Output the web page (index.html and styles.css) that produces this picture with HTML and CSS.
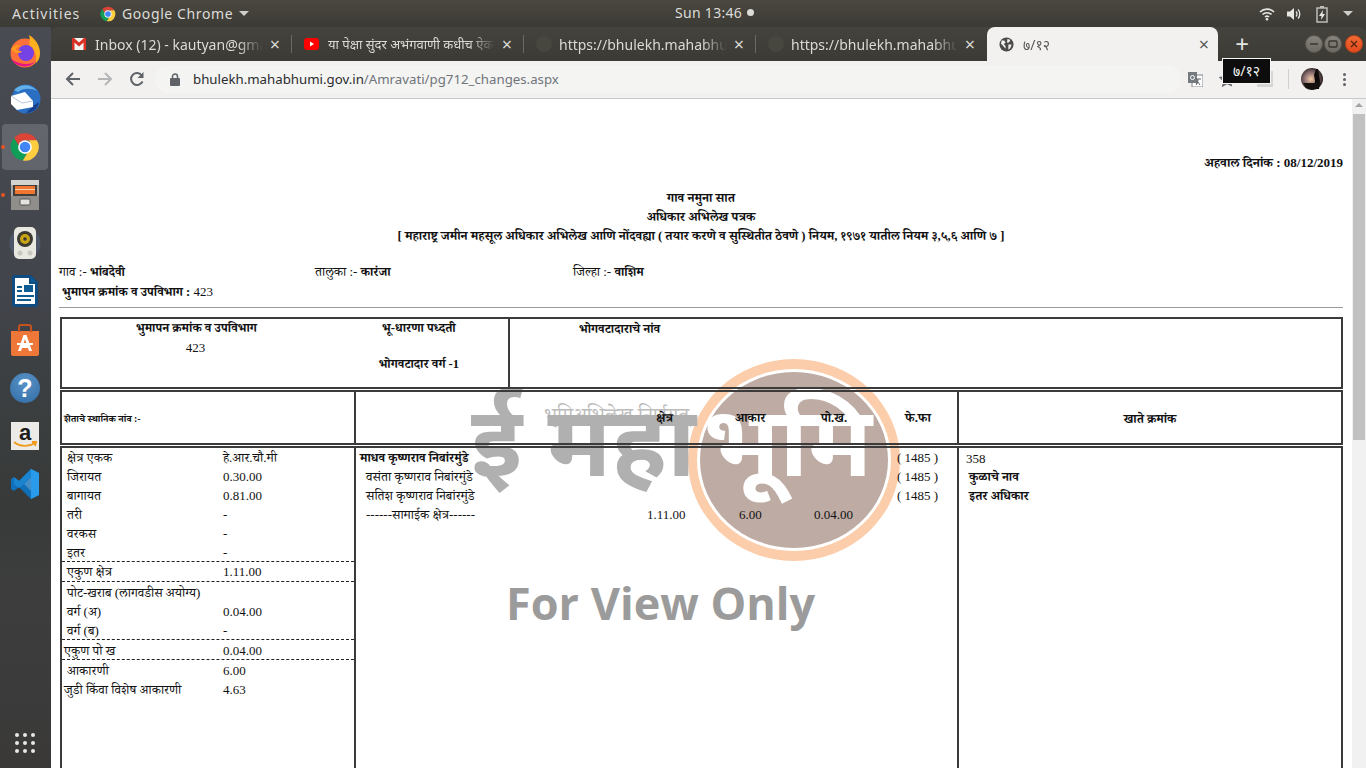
FILE: index.html
```html
<!DOCTYPE html>
<html lang="mr">
<head>
    <meta charset="UTF-8" />
    <title>७/१२</title>
    <link rel="stylesheet" href="styles.css">
</head>
<body>
    <svg class="defs" width="0" height="0">
        <symbol id="chrome" viewBox="0 0 48 48">
            <path fill="#db4437" d="M24 2a22 22 0 0 1 19 11H24a11 11 0 0 0-10.400 7.500L6.500 9.500A22 22 0 0 1 24 2z"/>
            <path fill="#0f9d58" d="M6.500 9.500l9.500 16.500a9 9 0 0 0 11 7.500L20.500 45.700A22 22 0 0 1 6.500 9.500z"/>
            <path fill="#ffcd40" d="M43 13a22 22 0 0 1-22.500 32.700L30.500 29a11 11 0 0 0-.5-16z"/>
            <circle cx="24" cy="24" r="11" fill="#fff"/>
            <circle cx="24" cy="24" r="8.500" fill="#4285f4"/>
        </symbol>
    </svg>

    <div class="topbar">
        <span class="activities">Activities</span>
        <svg class="top-chrome"><use href="#chrome"/></svg>
        <span class="app-name">Google Chrome</span>
        <span class="caret"></span>
        <span class="clock">Sun 13:46<i class="clock-dot"></i></span>
        <div class="tray">
            <svg width="16" height="14" viewBox="0 0 16 14"><path fill="none" stroke="#e6e6e2" stroke-width="1.600" d="M1 5a10 10 0 0 1 14 0M3.500 7.500a6.500 6.500 0 0 1 9 0M6 10a3 3 0 0 1 4 0"/><circle cx="8" cy="12.300" r="1.300" fill="#e6e6e2"/></svg>
            <svg width="16" height="14" viewBox="0 0 16 14"><path fill="#e6e6e2" d="M1 4.500h3L8 1v12L4 9.500H1z"/><path fill="none" stroke="#e6e6e2" stroke-width="1.300" d="M10 4.500a3.500 3.500 0 0 1 0 5M12 2.500a6.500 6.500 0 0 1 0 9"/></svg>
            <svg class="battery" width="12" height="18" viewBox="0 0 12 18"><rect x="1" y="3" width="10" height="14" fill="none" stroke="#bdbdb8" stroke-width="1.500"/><rect x="4" y="1" width="4" height="2" fill="#bdbdb8"/><path fill="#e6e6e2" d="M7 5L3 11h2.500L5 15l4-6H6.500z"/></svg>
            <span class="caret tray-caret"></span>
        </div>
    </div>

    <div class="desk">
        <nav class="dock">
            <div class="dock-item">
                <svg width="34" height="34" viewBox="0 0 34 34"><circle cx="17" cy="19" r="14.500" fill="#ff7139"/><path fill="#ffb01f" d="M21 1c5 3 11 9 11 18 0 5-2 8-4 10 1-8-1-14-7-18 1-3 1-7 0-10z"/><path fill="#e31587" d="M3 25c4 7 16 11 24 3-6 3-15 3-24-3z"/><circle cx="18" cy="19" r="8" fill="#7542e5"/><path fill="#ff9a1f" d="M3 15c3-4 8-5 11-3-4 0-6 2-6 4 3 0 5 1 6 2-4 2-8 1-11-3z"/></svg>
            </div>
            <div class="dock-item">
                <svg width="34" height="34" viewBox="0 0 34 34"><circle cx="18" cy="17" r="14.500" fill="#2a6fc1"/><path fill="#61b0ea" d="M6 8c5-6 17-7 23 1-6-3-14-3-19 1z"/><path fill="#173f8c" d="M18 31c6 0 12-4 13-11l-6 4z"/><path fill="#fff" d="M3 14l14-4 8 9v6L9 28 3 22z"/><path fill="none" stroke="#b8c6da" stroke-width="1" d="M3 14l11 7 11-2"/></svg>
            </div>
            <div class="dock-item dock-active">
                <i class="run-dot"></i>
                <svg width="30" height="30"><use href="#chrome"/></svg>
            </div>
            <div class="dock-item">
                <i class="run-dot"></i>
                <svg width="28" height="30" viewBox="0 0 28 30"><rect width="28" height="30" rx="1" fill="#a9a8a4"/><rect y="0" width="28" height="5" fill="#d4d3cf"/><rect x="2" y="5" width="24" height="11" fill="#3f3d3a"/><rect x="4" y="6" width="20" height="8" fill="#f0752e"/><rect x="4" y="9" width="20" height="1" fill="#f7d2b4"/><rect y="16" width="28" height="14" fill="#8f8e8a"/><rect x="9" y="19" width="10" height="6" rx="1" fill="#e4e3df" stroke="#555" stroke-width="1"/></svg>
            </div>
            <div class="dock-item">
                <svg width="32" height="34" viewBox="0 0 32 34"><circle cx="16" cy="17" r="15.500" fill="#4c5668"/><rect x="5" y="1" width="22" height="32" rx="5" fill="#e8e7e0"/><circle cx="16" cy="13" r="8" fill="#3c3a30"/><circle cx="16" cy="13" r="5" fill="#c9a514"/><circle cx="16" cy="13" r="1.800" fill="#3c3a30"/><circle cx="11" cy="27" r="2.500" fill="#c8c7c0"/><circle cx="21" cy="27" r="2.500" fill="#c8c7c0"/></svg>
            </div>
            <div class="dock-item">
                <svg width="26" height="32" viewBox="0 0 26 32"><path fill="#0f4c81" d="M2 0h17l7 7v23a2 2 0 0 1-2 2H2a2 2 0 0 1-2-2V2a2 2 0 0 1 2-2z"/><path fill="#fff" d="M3 3h14v6h6v20H3z"/><path fill="#0f5c94" d="M19 2l5 5h-5zM5 11h5v2H5zM5 15h5v2H5zM12 10h9v7h-9zM5 20h17v2H5zM5 24h14v2H5z"/></svg>
            </div>
            <div class="dock-item">
                <svg width="28" height="32" viewBox="0 0 28 32"><path fill="#ef7738" d="M0 7h28v23a2 2 0 0 1-2 2H2a2 2 0 0 1-2-2z"/><path fill="none" stroke="#c5531f" stroke-width="2" d="M8 8V3a2 2 0 0 1 2-2h8a2 2 0 0 1 2 2v5"/><path fill="#fff" d="M12.500 11h3L21 27h-3l-1-3h-6l-1 3H7zM14 15l-2 6h4z"/><rect x="6" y="19" width="16" height="2" fill="#fff"/></svg>
            </div>
            <div class="dock-item">
                <span class="help-icon">?</span>
            </div>
            <div class="dock-item">
                <div class="amazon-icon">
                    <span>a</span>
                    <svg width="24" height="8" viewBox="0 0 24 8"><path fill="none" stroke="#f09a1a" stroke-width="1.800" d="M1 1c6 5 15 5 21 1M19 1l4 0-1 4"/></svg>
                </div>
            </div>
            <div class="dock-item">
                <svg width="28" height="30" viewBox="0 0 28 30"><path fill="#0f6fb8" d="M20 0l8 4v22l-8 4L8 18l-5 4-3-2v-10l3-2 5 4z"/><path fill="#2a9bea" d="M20 0l8 4v22l-8 4z"/><path fill="#fff" fill-opacity=".22" d="M20 8l-7 7 7 7z"/><path fill="#1b84d1" d="M3 8l5 4 12-12v8l-7 7-5 4-5-4z"/></svg>
            </div>
            <div class="apps-grid">
                <i></i><i></i><i></i><i></i><i></i><i></i><i></i><i></i><i></i>
            </div>
        </nav>

        <div class="window">
            <div class="tabstrip">
                <div class="tab">
                    <svg class="favicon" width="14" height="12" viewBox="0 0 14 12"><rect width="14" height="12" fill="#f4f4f2"/><path fill="#d93025" d="M0 0h2l5 4.500L12 0h2v12h-2.500V4.500L7 8.500 2.500 4.500V12H0z"/></svg>
                    <span class="tab-title">Inbox (12) - kautyan@gmail.com</span>
                    <span class="tab-close">×</span>
                </div>
                <div class="tab">
                    <svg class="favicon" width="15" height="12" viewBox="0 0 15 12"><rect width="15" height="12" rx="3" fill="#f00"/><path fill="#fff" d="M6 3.500l4 2.500-4 2.500z"/></svg>
                    <span class="tab-title tab-title-mr">या पेक्षा सुंदर अभंगवाणी कधीच ऐकली नसेल</span>
                    <span class="tab-close">×</span>
                </div>
                <div class="tab">
                    <i class="favicon-dark"></i>
                    <span class="tab-title">https://bhulekh.mahabhumi.gov.in</span>
                    <span class="tab-close">×</span>
                </div>
                <div class="tab tab-last">
                    <i class="favicon-dark"></i>
                    <span class="tab-title">https://bhulekh.mahabhumi.gov.in</span>
                    <span class="tab-close">×</span>
                </div>
                <div class="tab tab-active">
                    <svg class="favicon" width="15" height="15" viewBox="0 0 16 16"><circle cx="8" cy="8" r="7.500" fill="#4a4a48"/><path fill="#f2f1ef" d="M3 3.500l3 .5 1 2-2 1.500 2 2v3L4.500 9.500 2 7zM9 2l3 1-1 2.500-2.500.5zM10 8h3.500L12 12l-2 1.500z"/></svg>
                    <span class="tab-title">७/१२</span>
                    <span class="tab-close">×</span>
                </div>
                <span class="new-tab">+</span>
                <div class="win-btns">
                    <span class="win-btn"><svg width="10" height="10" viewBox="0 0 10 10"><path stroke="#38362f" stroke-width="1.500" d="M1 5h8"/></svg></span>
                    <span class="win-btn"><svg width="10" height="10" viewBox="0 0 10 10"><rect x="1" y="2" width="8" height="6" rx="1" fill="none" stroke="#38362f" stroke-width="1.300"/></svg></span>
                    <span class="win-btn win-close"><svg width="10" height="10" viewBox="0 0 10 10"><path stroke="#5a2412" stroke-width="1.400" d="M2 2l6 6M8 2l-6 6"/></svg></span>
                </div>
            </div>

            <div class="toolbar">
                <svg class="nav-icon" width="16" height="16" viewBox="0 0 16 16"><path fill="none" stroke="#5f6368" stroke-width="2" d="M15 8H2M8 2L2 8l6 6"/></svg>
                <svg class="nav-icon" width="16" height="16" viewBox="0 0 16 16"><path fill="none" stroke="#b4b6b8" stroke-width="2" d="M1 8h13M8 2l6 6-6 6"/></svg>
                <svg class="nav-icon" width="16" height="16" viewBox="0 0 16 16"><path fill="none" stroke="#5f6368" stroke-width="2" d="M13.500 10.500A6 6 0 1 1 13 4.500"/><path fill="#5f6368" d="M14.500 1v6h-6z"/></svg>
                <div class="omnibox">
                    <svg width="10" height="13" viewBox="0 0 10 13"><path fill="none" stroke="#5f6368" stroke-width="1.500" d="M2.500 6V3.500a2.500 2.500 0 0 1 5 0V6"/><rect y="5" width="10" height="8" rx="1" fill="#5f6368"/></svg>
                    <span class="url"><b>bhulekh.mahabhumi.gov.in</b>/Amravati/pg712_changes.aspx</span>
                </div>
                <svg class="translate-icon" width="15" height="15" viewBox="0 0 15 15"><rect x="4" y="3" width="11" height="12" fill="#fff" stroke="#80868b"/><rect width="9" height="11" fill="#757a7e"/><circle cx="4.500" cy="5.500" r="2" fill="none" stroke="#fff"/><path stroke="#5f6368" d="M8 7h5M10 7c0 3-1 5-2 6M10 10l2 3"/></svg>
                <svg class="star-icon" width="16" height="16" viewBox="0 0 16 16"><path fill="none" stroke="#5f6368" stroke-width="1.300" d="M8 1.500l2 4.500 4.800.5-3.600 3.200 1 4.700L8 12.500l-4.200 2.400 1-4.700L1.200 6.500 6 6z"/></svg>
                <span class="ext-icon"></span>
                <span class="toolbar-sep"></span>
                <svg class="avatar" width="22" height="22" viewBox="0 0 22 22"><defs><radialGradient id="dusk" cx=".45" cy=".5" r=".6"><stop offset="0" stop-color="#f3c9a6"/><stop offset=".5" stop-color="#8b6f70"/><stop offset="1" stop-color="#141110"/></radialGradient></defs><circle cx="11" cy="11" r="11" fill="url(#dusk)"/><path fill="#0d0b0a" d="M15 1h2l1 6 1 6-1 8h-5l1-8-1-6z"/><path fill="#15110f" d="M2 15h18l-3 5-6 2-6-2z"/></svg>
                <span class="kebab"><i></i><i></i><i></i></span>
            </div>
            <div class="tooltip">७/१२</div>

            <div class="page">
                <div class="watermark">
                    <svg class="wm-logo" width="212" height="202" viewBox="0 0 212 202">
                        <ellipse cx="106" cy="101" rx="106" ry="101" fill="#fccdaa"/>
                        <ellipse cx="106" cy="101" rx="97" ry="91" fill="#fff"/>
                        <ellipse cx="106" cy="101" rx="94" ry="88" fill="#bdaba4"/>
                    </svg>
                    <span class="wm-org">भूमिअभिलेख निर्णयत्</span>
                    <span class="wm-maha">ई महा</span>
                    <span class="wm-bhumi">भूमि</span>
                    <span class="wm-only">For View Only</span>
                </div>

                <div class="sheet">
                    <div class="report-date">अहवाल दिनांक : 08/12/2019</div>
                    <div class="titles">
                        <div>गाव नमुना सात</div>
                        <div>अधिकार अभिलेख पत्रक</div>
                        <div>[ महाराष्ट्र जमीन महसूल अधिकार अभिलेख आणि नोंदवह्या ( तयार करणे व सुस्थितीत ठेवणे ) नियम, १९७१ यातील नियम ३,५,६ आणि ७ ]</div>
                    </div>
                    <div class="place-row">
                        <span class="place">गाव :- <b>भांबदेवी</b></span>
                        <span class="place">तालुका :- <b>कारंजा</b></span>
                        <span class="place">जिल्हा :- <b>वाशिम</b></span>
                    </div>
                    <div class="survey-line"><b>भुमापन क्रमांक व उपविभाग :</b> 423</div>
                    <div class="rule"></div>

                    <div class="box box-top">
                        <div class="top-left">
                            <div class="top-col">
                                <b>भुमापन क्रमांक व उपविभाग</b>
                                <span>423</span>
                            </div>
                            <div class="top-col top-col-2">
                                <b>भू-धारणा पध्दती</b>
                                <b class="holder-class">भोगवटादार वर्ग -1</b>
                            </div>
                        </div>
                        <div class="top-right"><b>भोगवटादाराचे नांव</b></div>
                    </div>

                    <div class="box box-head">
                        <div class="head-local">शेताचे स्थानिक नांव :-</div>
                        <div class="head-mid">
                            <b class="h-area">क्षेत्र</b>
                            <b class="h-akar">आकार</b>
                            <b class="h-pokh">पो.ख.</b>
                            <b class="h-fefa">फे.फा</b>
                        </div>
                        <div class="head-acct"><b>खाते क्रमांक</b></div>
                    </div>

                    <div class="box box-body">
                        <div class="areas">
                            <div class="area-row"><span>क्षेत्र एकक</span><span>हे.आर.चौ.मी</span></div>
                            <div class="area-row"><span>जिरायत</span><span>0.30.00</span></div>
                            <div class="area-row"><span>बागायत</span><span>0.81.00</span></div>
                            <div class="area-row"><span>तरी</span><span>-</span></div>
                            <div class="area-row"><span>वरकस</span><span>-</span></div>
                            <div class="area-row"><span>इतर</span><span>-</span></div>
                            <div class="area-row area-total area-total-first"><span>एकुण क्षेत्र</span><span>1.11.00</span></div>
                            <div class="area-row area-flush"><span>पोट-खराब (लागवडीस अयोग्य)</span></div>
                            <div class="area-row"><span>वर्ग (अ)</span><span>0.04.00</span></div>
                            <div class="area-row"><span>वर्ग (ब)</span><span>-</span></div>
                            <div class="area-row area-total area-flush"><span>एकुण पो ख</span><span>0.04.00</span></div>
                            <div class="area-row"><span>आकारणी</span><span>6.00</span></div>
                            <div class="area-row area-flush"><span>जुडी किंवा विशेष आकारणी</span><span>4.63</span></div>
                        </div>
                        <div class="owners">
                            <div class="owner-row owner-main"><b>माधव कृष्णराव निबांरमुंडे</b><span class="fefa">( 1485 )</span></div>
                            <div class="owner-row"><span>वसंता कृष्णराव निबांरमुंडे</span><span class="fefa">( 1485 )</span></div>
                            <div class="owner-row"><span>सतिश कृष्णराव निबांरमुंडे</span><span class="fefa">( 1485 )</span></div>
                            <div class="owner-row common">
                                <span>------सामाईक क्षेत्र------</span>
                                <span class="c-area">1.11.00</span>
                                <span class="c-akar">6.00</span>
                                <span class="c-pokh">0.04.00</span>
                            </div>
                        </div>
                        <div class="acct">
                            <div class="acct-no">358</div>
                            <b>कुळाचे नाव</b>
                            <b>इतर अधिकार</b>
                        </div>
                    </div>
                </div>

                <div class="scrollbar"><i class="sb-up"></i><i class="sb-thumb"></i></div>
            </div>
        </div>
    </div>
</body>
</html>
```

FILE: styles.css
```css
* {
    margin: 0;
    padding: 0;
    box-sizing: border-box;
}

body {
    width: 1366px;
    height: 768px;
    overflow: hidden;
    display: flex;
    flex-direction: column;
    background: #3c3a36;
    font-family: "Noto Sans", "Open Sans", sans-serif;
}

.defs {
    position: absolute;
}

/* gnome top bar */
.topbar {
    height: 27px;
    flex: none;
    display: flex;
    align-items: center;
    position: relative;
    padding-left: 12px;
    background: linear-gradient(#4b4841, #3c3a35);
    color: #dcdcd8;
    font-size: 14px;
}

.activities {
    width: 88px;
    letter-spacing: 1px;
}

.top-chrome {
    width: 16px;
    height: 16px;
    margin-right: 6px;
}

.app-name {
    letter-spacing: 0.6px;
}

.caret {
    width: 0;
    height: 0;
    margin-left: 6px;
    border: 5px solid transparent;
    border-top-color: #cfcfca;
    border-bottom: 0;
}

.clock {
    position: absolute;
    left: 675px;
    top: 3px;
    display: flex;
    align-items: center;
    letter-spacing: 0.3px;
}

.clock-dot {
    width: 7px;
    height: 7px;
    margin-left: 5px;
    border-radius: 50%;
    background: #dcdcd8;
}

.tray {
    margin-left: auto;
    margin-right: 13px;
    display: flex;
    align-items: center;
    gap: 11px;
}

.battery {
    margin-left: 3px;
}

.tray-caret {
    margin-left: 4px;
}

.desk {
    flex: 1;
    display: flex;
    min-height: 0;
}

/* launcher */
.dock {
    width: 51px;
    flex: none;
    position: relative;
    display: flex;
    flex-direction: column;
    align-items: center;
    padding: 1px 1px 0 0;
    background: linear-gradient(#484b52 0, #43454d 250px, #3d4043 340px, #373a38 480px, #3d3d3e 560px, #3a3938 741px);
}

.dock-item {
    width: 46px;
    height: 46px;
    margin-bottom: 2.1px;
    position: relative;
    display: flex;
    align-items: center;
    justify-content: center;
    border-radius: 4px;
}

.dock-active {
    background: rgba(255, 255, 255, 0.16);
}

.run-dot {
    position: absolute;
    left: -1px;
    top: 21px;
    width: 4px;
    height: 4px;
    border-radius: 50%;
    background: #e95420;
}

.help-icon {
    width: 30px;
    height: 30px;
    border-radius: 50%;
    background: radial-gradient(circle at 50% 30%, #5b93c7, #2f6ba5);
    color: #fff;
    font: bold 25px/30px "Liberation Sans", sans-serif;
    text-align: center;
}

.amazon-icon {
    width: 28px;
    height: 28px;
    position: relative;
    background: #ecebe7;
    text-align: center;
    color: #1d1d1b;
    font: bold 22px/22px "Liberation Sans", sans-serif;
}

.amazon-icon svg {
    position: absolute;
    left: 2px;
    bottom: 1px;
}

.apps-grid {
    position: absolute;
    left: 15px;
    bottom: 15px;
    display: grid;
    grid-template-columns: repeat(3, 4px);
    gap: 4px;
}

.apps-grid i {
    width: 4px;
    height: 4px;
    border-radius: 50%;
    background: #e8e8e8;
}

/* browser window */
.window {
    flex: 1;
    min-width: 0;
    display: flex;
    flex-direction: column;
    position: relative;
}

.tabstrip {
    height: 34px;
    flex: none;
    display: flex;
    align-items: stretch;
    padding-left: 9px;
    background: linear-gradient(#45433d, #3c3a35);
    border-radius: 6px 6px 0 0;
}

.tab {
    width: 232px;
    flex: none;
    display: flex;
    align-items: center;
    padding: 0 9px 0 12px;
    color: #dadad6;
    font-size: 14px;
    background: linear-gradient(#6c6a65, #6c6a65) right center / 1px 18px no-repeat;
}

.tab-last {
    width: 231px;
    background: none;
}

.tab-active {
    width: 231px;
    padding-right: 6px;
    border-radius: 8px 8px 0 0;
    background: #f2f1ef;
    color: #5a5a58;
}

.favicon {
    flex: none;
    margin-right: 9px;
}

.favicon-dark {
    width: 16px;
    height: 16px;
    flex: none;
    margin-right: 7px;
    border-radius: 50%;
    background: #47463f;
}

.tab-title {
    flex: 1;
    min-width: 0;
    white-space: nowrap;
    overflow: hidden;
    -webkit-mask-image: linear-gradient(90deg, #000 85%, transparent);
    mask-image: linear-gradient(90deg, #000 85%, transparent);
}

.tab-title-mr {
    font-size: 13px;
}

.tab-close {
    width: 16px;
    flex: none;
    margin-left: 4px;
    text-align: center;
    font-size: 18px;
    line-height: 16px;
}

.new-tab {
    width: 48px;
    text-align: center;
    color: #e4e4e0;
    font-size: 24px;
    line-height: 33px;
}

.win-btns {
    margin-left: auto;
    margin-right: 3px;
    display: flex;
    align-items: center;
    gap: 1px;
}

.win-btn {
    width: 18px;
    height: 18px;
    display: flex;
    align-items: center;
    justify-content: center;
    border: 1px solid #59574f;
    border-radius: 50%;
    background: linear-gradient(#85837b, #6c6a63);
}

.win-close {
    margin-left: 2px;
    border-color: #b8431a;
    background: linear-gradient(#f06a35, #e4491c);
}

.toolbar {
    height: 38px;
    flex: none;
    display: flex;
    align-items: center;
    padding: 0 0 1px 14px;
    background: #f2f1ef;
    border-bottom: 1px solid #c9c9c7;
}

.nav-icon {
    margin-right: 16px;
}

.omnibox {
    width: 1026px;
    height: 28px;
    margin-left: -6px;
    display: flex;
    align-items: center;
    gap: 10px;
    padding-left: 15px;
    border-radius: 14px;
    background: #f4f4f3;
}

.url {
    margin-left: 3px;
    font-size: 13.25px;
    color: #70757a;
    white-space: nowrap;
}

.url b {
    font-weight: 400;
    color: #2b2c2e;
}

.translate-icon {
    margin-left: 7px;
}

.star-icon {
    margin-left: 16px;
}

.ext-icon {
    width: 16px;
    height: 16px;
    margin-left: 22px;
    background: #d6d6d4;
}

.toolbar-sep {
    width: 1px;
    height: 20px;
    margin-left: 15px;
    background: #cfcfcd;
}

.avatar {
    margin-left: 12px;
}

.kebab {
    margin-left: 20px;
    display: flex;
    flex-direction: column;
    gap: 2px;
}

.kebab i {
    width: 3px;
    height: 3px;
    border-radius: 50%;
    background: #5f6368;
}

.tooltip {
    position: absolute;
    left: 1171px;
    top: 31px;
    z-index: 5;
    width: 49px;
    height: 26px;
    background: #0d0d0d;
    border: 1px solid #f5f5f5;
    color: #f2f2f2;
    font-size: 14px;
    line-height: 24px;
    text-align: center;
}

/* page */
.page {
    flex: 1;
    min-height: 0;
    position: relative;
    overflow: hidden;
    background: #fff;
    font: 13px/19px "Liberation Serif", "Noto Serif Devanagari", "Lohit Devanagari", serif;
    color: #111;
}

.sheet {
    position: relative;
    padding: 54px 23px 0 8px;
}

.report-date {
    text-align: right;
    font-weight: 700;
    height: 36px;
}

.titles {
    font-weight: 700;
    font-size: 12.7px;
    text-align: center;
}

.titles div {
    height: 19px;
}

.place b,
.survey-line b,
.top-col b,
.top-right b,
.head-mid b,
.head-acct b,
.owner-main b,
.acct b {
    font-size: 12.6px;
}

.place-row {
    height: 19px;
    display: grid;
    grid-template-columns: 256px 258px 1fr;
    margin-top: 16px;
}

.survey-line {
    height: 19px;
    padding-left: 3px;
    margin-top: 1px;
}

.rule {
    height: 1px;
    margin-top: 6px;
    background: #9a9a9a;
}

.box {
    display: flex;
    margin-left: 1px;
    border: 2px solid #3b3b3b;
}

.box-top {
    height: 72px;
    margin-top: 9px;
}

.top-left {
    width: 448px;
    flex: none;
    display: flex;
    border-right: 2px solid #3b3b3b;
}

.top-col {
    width: 270px;
    display: flex;
    flex-direction: column;
    align-items: center;
}

.top-col-2 {
    width: 178px;
    padding-right: 1px;
}

.top-col span {
    margin-right: 2px;
}

.holder-class {
    margin-top: 17px;
}

.top-right {
    padding-left: 69px;
}

.box-head {
    height: 55px;
    margin-top: 1px;
    align-items: stretch;
}

.head-local {
    width: 294px;
    flex: none;
    padding-left: 2px;
    font-size: 9.9px;
    font-weight: 700;
    line-height: 54px;
    border-right: 2px solid #3b3b3b;
}

.head-mid {
    width: 603px;
    flex: none;
    position: relative;
    border-right: 2px solid #3b3b3b;
    line-height: 53px;
}

.head-mid b {
    position: absolute;
    top: 0;
}

.h-area { left: 300px; }
.h-akar { left: 379px; }
.h-pokh { left: 465px; }
.h-fefa { left: 549px; }

.head-acct {
    flex: 1;
    text-align: center;
    line-height: 53px;
}

.box-body {
    height: 400px;
    margin-top: 1px;
}

.areas {
    width: 294px;
    flex: none;
    border-right: 2px solid #3b3b3b;
}

.area-row {
    height: 19px;
    display: grid;
    grid-template-columns: 156px 1fr;
    padding-left: 5px;
}

.area-flush {
    padding-left: 2px;
}

.area-flush span:last-child {
    margin-left: 3px;
}

.area-total {
    height: 21px;
    border-top: 1px dashed #222;
    border-bottom: 1px dashed #222;
}

.area-total-first {
    margin-top: -1px;
}

.area-total ~ .area-row {
    padding-top: 1px;
}

.owners {
    width: 603px;
    flex: none;
    border-right: 2px solid #3b3b3b;
}

.owner-row {
    height: 19px;
    position: relative;
    padding-left: 10px;
}

.owner-main {
    padding-left: 4px;
}

.fefa {
    position: absolute;
    left: 541px;
    top: 0;
}

.c-area,
.c-akar,
.c-pokh {
    position: absolute;
    top: 0;
}

.c-area { left: 291px; }
.c-akar { left: 383px; }
.c-pokh { left: 458px; }

.acct {
    flex: 1;
    padding: 1px 0 0 7px;
    display: flex;
    flex-direction: column;
}

.acct b {
    padding-left: 3px;
}

.scrollbar {
    position: absolute;
    right: 0;
    top: 0;
    bottom: 0;
    width: 14px;
    background: #f1f1f1;
}

.sb-up {
    position: absolute;
    left: 3px;
    top: 4px;
    border: 4px solid transparent;
    border-bottom: 4px solid #a3a3a3;
    border-top: 0;
}

.sb-thumb {
    position: absolute;
    left: 1px;
    top: 15px;
    width: 12px;
    height: 326px;
    background: #c1c1c1;
}

/* watermark sits under the sheet */
.watermark {
    position: absolute;
    inset: 0;
}

.watermark span {
    position: absolute;
    white-space: nowrap;
}

.wm-logo {
    position: absolute;
    left: 637px;
    top: 260px;
}

.wm-org {
    left: 493px;
    top: 307px;
    font-size: 20px;
    color: #bdbdbd;
}

.wm-maha {
    left: 420px;
    top: 274px;
    font: 700 98px/130px "Noto Sans", sans-serif;
    color: #b0b0b0;
}

.wm-bhumi {
    left: 652px;
    top: 274px;
    font: 700 98px/130px "Noto Sans", sans-serif;
    color: #fff;
}

.wm-only {
    left: 455px;
    top: 473px;
    font: 700 45px/62px "Open Sans", sans-serif;
    color: #9b9b9b;
}
```
